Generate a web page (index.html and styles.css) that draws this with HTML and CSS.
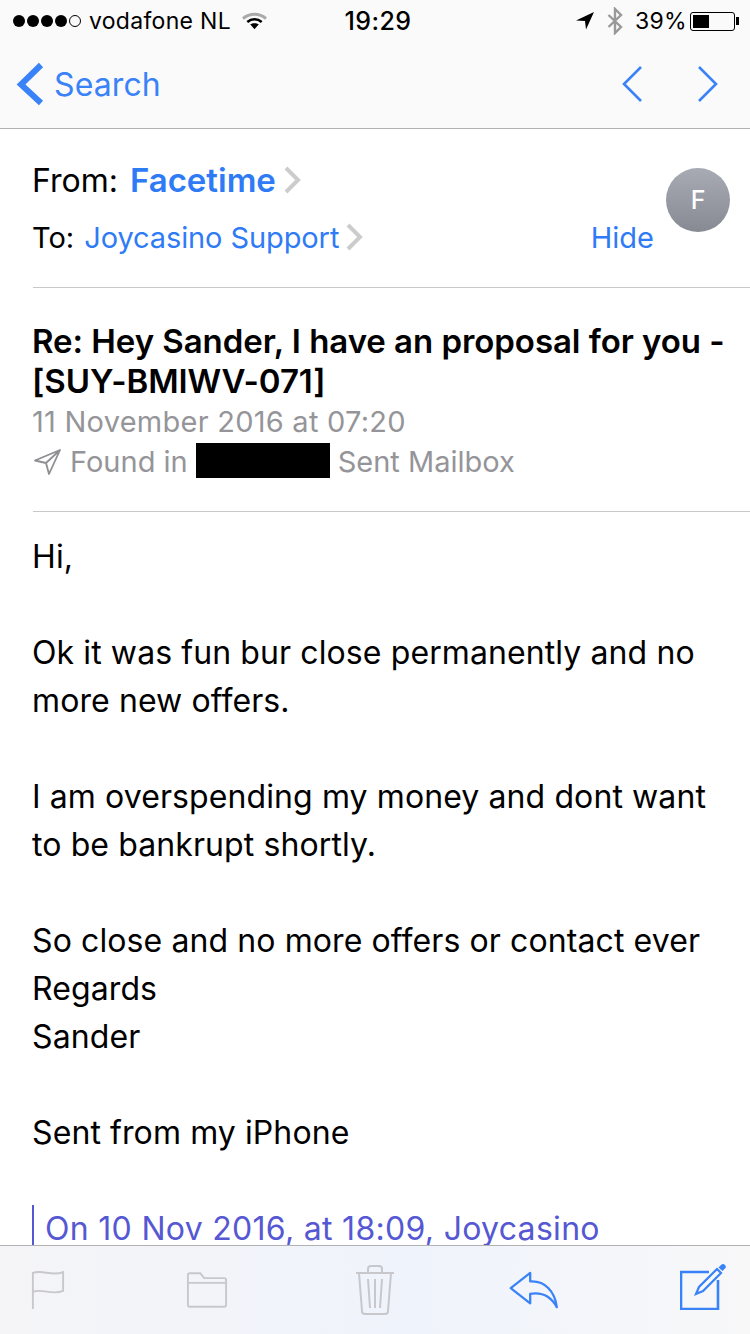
FILE: index.html
```html
<!DOCTYPE html>
<html lang="en">
<head>
  <meta charset="UTF-8">
  <title>Mail</title>
  <meta name="viewport" content="width=device-width, initial-scale=1.0">
  <link rel="stylesheet" href="styles.css">
</head>
<body>
  <header class="top-bar">
    <div class="status">
      <div class="status-left">
        <span class="signal"><i></i><i></i><i></i><i></i><i class="off"></i></span>
        <span class="carrier">vodafone NL</span>
        <svg class="wifi" width="25" height="18" viewBox="0 0 26 18">
          <path d="M1 6.500 C8 0.500 18 0.500 25 6.500" fill="none" stroke="#aaa" stroke-width="3.200"/>
          <path d="M5.500 10 C10 6.500 16 6.500 20.500 10" fill="none" stroke="#000" stroke-width="2.800"/>
          <path d="M8.500 12.500 C11 10.800 15 10.800 17.500 12.500 L13 17.500 Z" fill="#000"/>
        </svg>
      </div>
      <div class="clock">19:29</div>
      <div class="status-right">
        <svg width="20" height="20" viewBox="0 0 20 20"><path d="M19 1 L1 9.500 L10 10 L11 18.500 Z" fill="#000"/></svg>
        <svg class="bt" width="16" height="28" viewBox="0 0 16 28"><path d="M1.500 8 L14 20 L8 26 L8 2 L14 8 L1.500 20" fill="none" stroke="#999" stroke-width="2.400"/></svg>
        <span class="percent">39%</span>
        <span class="battery"><span class="battery-level"></span></span>
      </div>
    </div>
    <nav class="nav">
      <a class="back">
        <svg width="28" height="44" viewBox="0 0 28 44"><path d="M25 3 L5 22.500 L25 41" fill="none" stroke="#3a82f7" stroke-width="6"/></svg>
        <span>Search</span>
      </a>
      <div class="arrows">
        <svg width="20" height="36" viewBox="0 0 20 36"><path d="M19 1 L2 18 L19 35" fill="none" stroke="#3a82f7" stroke-width="2.600"/></svg>
        <svg width="20" height="36" viewBox="0 0 20 36"><path d="M1 1 L18 18 L1 35" fill="none" stroke="#3a82f7" stroke-width="2.600"/></svg>
      </div>
    </nav>
  </header>

  <main class="message">
    <section class="people">
      <div class="from-line">
        <span class="label">From:</span>
        <span class="sender">Facetime</span>
        <svg class="chevron" width="17" height="28" viewBox="0 0 17 28"><path d="M2 2 L14 14 L2 26" fill="none" stroke="#ccc" stroke-width="4"/></svg>
      </div>
      <div class="to-line">
        <span class="label">To:</span>
        <span class="recipient">Joycasino Support</span>
        <svg class="chevron" width="17" height="28" viewBox="0 0 17 28"><path d="M2 2 L14 14 L2 26" fill="none" stroke="#ccc" stroke-width="4"/></svg>
        <span class="hide">Hide</span>
      </div>
      <div class="avatar">F</div>
    </section>

    <section class="subject-block">
      <h1 class="subject">Re: Hey Sander, I have an proposal for you - [SUY-BMIWV-071]</h1>
      <div class="meta date">11 November 2016 at 07:20</div>
      <div class="meta found">
        <svg width="28" height="28" viewBox="0 0 28 28"><path d="M27 2 L2 12.500 L13 15 L16 26 Z M27 2 L13 15" fill="none" stroke="#8e8e93" stroke-width="1.800" stroke-linejoin="round"/></svg>
        <span>Found in</span>
        <span class="redacted"></span>
        <span>Sent Mailbox</span>
      </div>
    </section>

    <section class="body-text">
      <p>Hi,</p>
      <p>Ok it was fun bur close permanently and no more new offers.</p>
      <p>I am overspending my money and dont want to be bankrupt shortly.</p>
      <p>So close and no more offers or contact ever<br>Regards<br>Sander</p>
      <p>Sent from my iPhone</p>
      <blockquote>On 10 Nov 2016, at 18:09, Joycasino</blockquote>
    </section>
  </main>

  <footer class="toolbar">
    <svg class="flag" width="34" height="40" viewBox="0 0 36 42"><path d="M2 41 L2 3 C12 -1 22 7 34 2 L34 22 C22 27 12 19 2 23" fill="none" stroke="#c8c8cc" stroke-width="2"/></svg>
    <svg class="folder" width="42" height="37" viewBox="0 0 44 38"><path d="M2 10 L2 3 Q2 1 4 1 L15 1 L19 6 L40 6 Q42 6 42 8 L42 34 Q42 36 40 36 L4 36 Q2 36 2 34 Z M2 11 L42 11" fill="none" stroke="#c8c8cc" stroke-width="2"/></svg>
    <svg class="trash" width="38" height="50" viewBox="0 0 38 50"><path d="M0 8 L38 8 M12 8 L12 4 Q12 1 15 1 L23 1 Q26 1 26 4 L26 8 M3 8 L6 46 Q6 49 9 49 L29 49 Q32 49 32 46 L35 8 M12 14 L14 43 M19 14 L19 43 M26 14 L24 43" fill="none" stroke="#c8c8cc" stroke-width="2"/></svg>
    <svg class="reply" width="50" height="38" viewBox="0 0 52 40"><path d="M1.500 18 L22 2 L22 11 C38 10 48 22 50 38 C44 27 34 22 22 24 L22 34 Z" fill="none" stroke="#3a82f7" stroke-width="2.400" stroke-linejoin="round"/></svg>
    <svg class="compose" width="48" height="48" viewBox="0 0 48 48"><path d="M29 10 L1 10 L1 47 L38 47 L38 18" fill="none" stroke="#3a82f7" stroke-width="2.600"/><path d="M16 32 L19 25 L37 7 L41 11 L23 29 Z" fill="none" stroke="#3a82f7" stroke-width="2.200"/><path d="M38.500 5.500 L41.500 2.500 Q43.500 1.500 45 3 Q46.500 4.500 45.500 6 L42.500 9 Z" fill="#3a82f7"/></svg>
  </footer>
</body>
</html>
```

FILE: styles.css
```css
* {
  box-sizing: border-box;
}

html,
body {
  margin: 0;
  height: 1334px;
}

body {
  display: flex;
  flex-direction: column;
  width: 750px;
  overflow: hidden;
  background: #fff;
  color: #000;
  font-family: Inter, "Liberation Sans", sans-serif;
}

/* status bar and nav */
.top-bar {
  flex: none;
  height: 129px;
  background: #fafafa;
  border-bottom: 1px solid #b2b2b2;
}

.status {
  display: grid;
  grid-template-columns: 1fr auto 1fr;
  align-items: center;
  height: 40px;
  padding: 2px 8px 0 13px;
  font-size: 23px;
}

.status-left,
.status-right {
  display: flex;
  align-items: center;
}

.status-right {
  justify-content: flex-end;
}

.signal {
  display: flex;
  gap: 2px;
}

.signal i {
  width: 12px;
  height: 12px;
  border-radius: 50%;
  background: #000;
}

.signal i.off {
  background: none;
  border: 1px solid #000;
}

.carrier {
  margin-left: 8px;
  letter-spacing: 0.3px;
}

.wifi {
  margin-left: 11px;
}

.clock {
  margin-left: 1px;
  font-size: 25px;
  font-weight: 500;
  letter-spacing: 0.4px;
}

.bt {
  margin-left: 12px;
}

.percent {
  margin-left: 12px;
  letter-spacing: 0.3px;
}

.battery {
  position: relative;
  display: block;
  width: 45px;
  height: 19px;
  margin: 0 7px 0 3px;
  padding: 2px;
  border: 1px solid #000;
  border-radius: 3px;
}

.battery::after {
  content: "";
  position: absolute;
  top: 4px;
  right: -5px;
  width: 3px;
  height: 8px;
  background: #000;
}

.battery-level {
  display: block;
  width: 16px;
  height: 100%;
  background: #000;
}

.nav {
  display: flex;
  align-items: center;
  justify-content: space-between;
  height: 88px;
  padding: 0 32px 0 16px;
}

.back {
  display: flex;
  align-items: center;
  gap: 10px;
  color: #3a82f7;
  font-size: 32px;
  letter-spacing: 0.1px;
}

.arrows {
  display: flex;
  gap: 56px;
}

/* message */
.message {
  flex: 1;
  min-height: 0;
  overflow: hidden;
  padding-left: 33px;
}

.people {
  position: relative;
  height: 159px;
  padding-top: 28px;
  border-bottom: 1px solid #c8c8c8;
}

.from-line,
.to-line {
  display: flex;
  align-items: center;
  margin-left: -1px;
  padding-right: 96px;
}

.from-line {
  height: 46px;
  font-size: 32px;
}

.to-line {
  height: 40px;
  margin-top: 14px;
  font-size: 29px;
}

.sender {
  margin-left: 12px;
  color: #2f7bf6;
  font-size: 33px;
  font-weight: 600;
}

.recipient {
  margin-left: 10px;
  color: #2f7bf6;
  letter-spacing: -0.1px;
}

.from-line .chevron {
  margin-left: 8px;
}

.chevron {
  margin-left: 7px;
}

.hide {
  margin-left: auto;
  color: #2f7bf6;
}

.avatar {
  position: absolute;
  top: 39px;
  right: 20px;
  display: flex;
  align-items: center;
  justify-content: center;
  width: 64px;
  height: 64px;
  border-radius: 50%;
  background: linear-gradient(#a8aab4, #878a93);
  color: #fff;
  font-size: 25px;
  font-weight: 500;
}

.subject-block {
  height: 224px;
  padding-top: 33px;
  border-bottom: 1px solid #c8c8c8;
}

.subject {
  margin: 0 0 1px -1px;
  padding-right: 10px;
  font-size: 33px;
  font-weight: 600;
  line-height: 40px;
  letter-spacing: -0.05px;
}

.meta {
  margin-left: -1px;
  color: #959599;
  font-size: 29px;
  line-height: 40px;
}

.date {
  letter-spacing: 0.25px;
}

.found {
  display: flex;
  align-items: center;
  gap: 8px;
}

.found svg {
  margin-left: 1px;
}

.found span:first-of-type {
  margin-left: 1px;
}

.redacted {
  width: 134px;
  height: 35px;
  margin-bottom: 4px;
  background: #000;
}

.body-text {
  margin-left: -1px;
  padding: 21px 40px 0 0;
  font-size: 32px;
  line-height: 48px;
  letter-spacing: 0.1px;
}

.body-text p {
  margin: 0 0 48px;
}

blockquote {
  margin: 0;
  padding-left: 11px;
  border-left: 2px solid #5558d2;
  color: #5558d2;
  letter-spacing: 0.3px;
}

/* bottom toolbar */
.toolbar {
  flex: none;
  display: flex;
  align-items: center;
  height: 89px;
  padding-left: 31px;
  background: linear-gradient(90deg, #f5f5f8, #eff3fb 55%, #f8f8f9);
  border-top: 1px solid #b2b2b2;
}

.folder {
  margin-left: 121px;
}

.trash {
  margin-left: 128px;
}

.reply {
  margin-left: 115px;
}

.compose {
  margin: -8px 0 0 121px;
}
```
